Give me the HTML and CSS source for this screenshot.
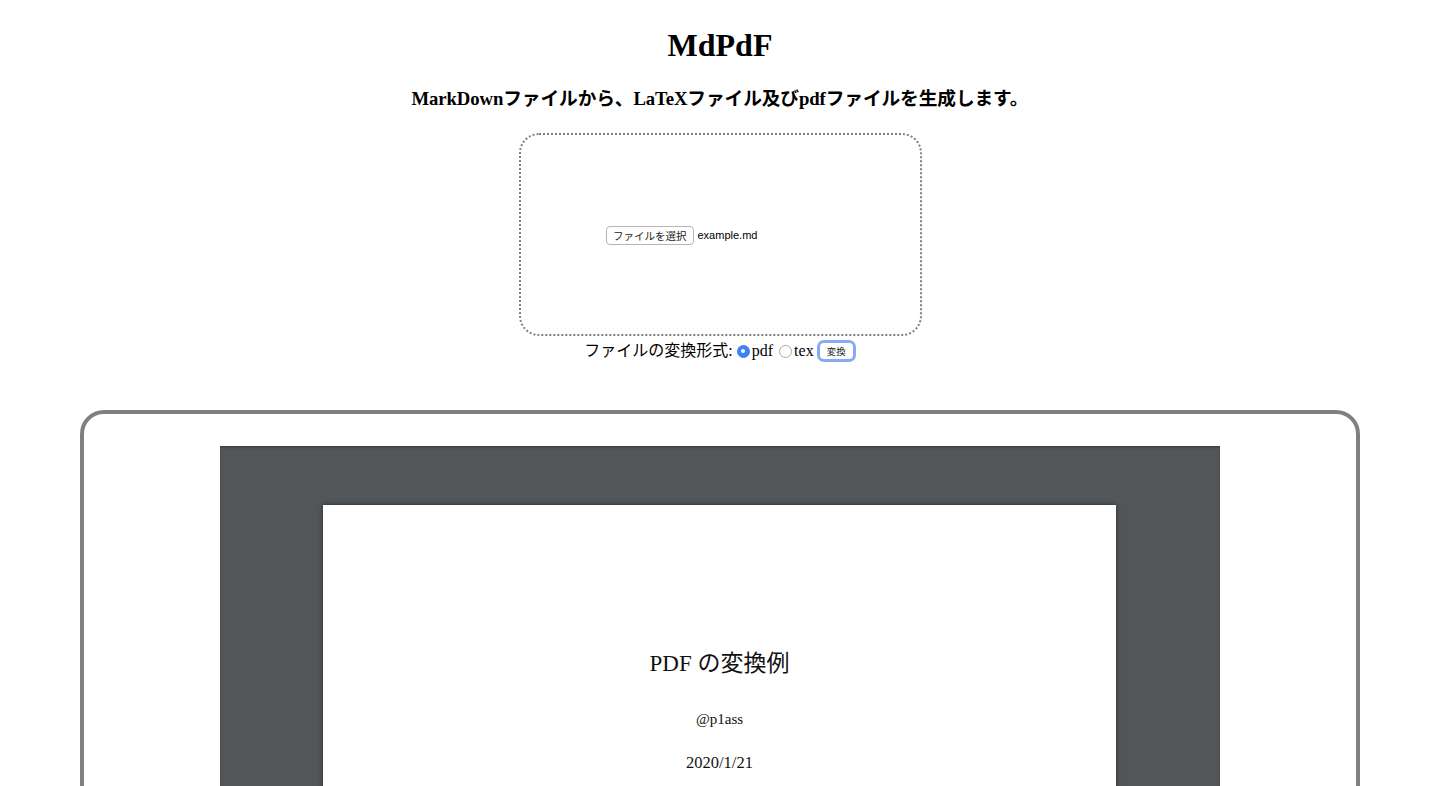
FILE: index.html
```html
<!DOCTYPE html>
<html lang="ja">
<head>
<meta charset="utf-8">
<title>MdPdF</title>
<link rel="stylesheet" href="styles.css">
</head>
<body>
<header class="head">
  <h1 class="title">MdPdF</h1>
  <h3 class="lead">MarkDownファイルから、LaTeXファイル及びpdfファイルを生成します。</h3>
</header>
<form class="form">
  <div class="dropzone">
    <div class="file-input">
      <span class="file-btn">ファイルを選択</span>
      <span class="file-name">example.md</span>
    </div>
  </div>
  <div class="options">
    <span class="label">ファイルの変換形式:</span>
    <span class="radio checked"></span><span class="opt">pdf</span>
    <span class="radio"></span><span class="opt">tex</span>
    <span class="submit-ring"><span class="submit">変換</span></span>
  </div>
</form>
<section class="preview">
  <div class="viewer">
    <div class="page">
      <div class="doc-title">PDF の変換例</div>
      <div class="doc-author">@p1ass</div>
      <div class="doc-date">2020/1/21</div>
    </div>
  </div>
</section>
</body>
</html>
```
FILE: styles.css
```css
html, body {
  margin: 0;
  padding: 0;
  background: #fff;
  overflow: hidden;
}
body {
  font-family: "Liberation Serif", "Noto Sans CJK JP", serif;
  color: #000;
  height: 786px;
}
.head {
  display: flex;
  flex-direction: column;
  align-items: center;
}
.title {
  margin: 27px 0 0;
  font-size: 32px;
  line-height: 36px;
  font-weight: 700;
}
.lead {
  margin: 25px 0 0;
  font-size: 18.72px;
  line-height: 22px;
  font-weight: 700;
  letter-spacing: -0.1px;
}
.form {
  display: flex;
  flex-direction: column;
  align-items: center;
}
.dropzone {
  margin-top: 23px;
  width: 403px;
  height: 203px;
  box-sizing: border-box;
  border: 2px dotted #808080;
  border-radius: 20px;
  display: flex;
  align-items: center;
  justify-content: center;
}
.file-input {
  width: 228px;
  display: flex;
  align-items: center;
  gap: 4px;
  margin-top: 1px;
}
.file-btn {
  display: inline-block;
  box-sizing: border-box;
  height: 19px;
  padding: 0 6px;
  border: 1px solid #b5b5b5;
  border-radius: 4px;
  font-family: "Noto Sans CJK JP", "Liberation Sans", sans-serif;
  font-size: 10.5px;
  line-height: 17px;
  color: #222;
  background: #fff;
}
.file-name {
  font-family: "Liberation Sans", "Noto Sans CJK JP", sans-serif;
  font-size: 11px;
  color: #000;
}
.options {
  margin-top: 3px;
  height: 23px;
  display: flex;
  align-items: center;
  font-size: 16px;
  line-height: 18px;
}
.radio {
  display: inline-block;
  width: 13px;
  height: 13px;
  box-sizing: border-box;
  border-radius: 50%;
  border: 1px solid #a8a8a8;
  background: #fff;
  margin: 1px 2px 0 4px;
  position: relative;
}
.radio.checked {
  background: #3b82f6;
  border-color: #3b82f6;
}
.radio.checked::after {
  content: "";
  position: absolute;
  left: 3.5px;
  top: 3.5px;
  width: 4px;
  height: 4px;
  border-radius: 50%;
  background: #fff;
}
.opt {
  margin-right: 2px;
}
.submit-ring {
  display: inline-flex;
  margin-left: 1px;
  padding: 3px;
  border-radius: 7px;
  background: #8aa9f3;
}
.submit {
  display: inline-block;
  box-sizing: border-box;
  height: 16px;
  padding: 0 7px;
  border-radius: 4px;
  background: #fff;
  font-family: "Noto Sans CJK JP", "Liberation Sans", sans-serif;
  font-size: 9.5px;
  line-height: 16px;
  color: #222;
}
.preview {
  margin: 48px auto 0;
  width: 1280px;
  height: 600px;
  box-sizing: border-box;
  border: 4px solid #808080;
  border-radius: 24px;
  padding-top: 32px;
  display: flex;
  justify-content: center;
}
.viewer {
  width: 1000px;
  height: 560px;
  background: #525659;
  box-shadow: inset 0 2px 3px -1px rgba(0, 0, 0, 0.35);
  display: flex;
  justify-content: center;
  padding-top: 59px;
  padding-right: 1px;
  box-sizing: border-box;
}
.page {
  width: 793px;
  height: 1122px;
  background: #fff;
  box-shadow: 0 0 4px rgba(0, 0, 0, 0.55);
  display: flex;
  flex-direction: column;
  align-items: center;
  font-family: "Liberation Serif", "Noto Sans CJK JP", serif;
  color: #111;
}
.doc-title {
  margin-top: 145px;
  font-size: 23px;
  line-height: 28px;
  font-weight: 400;
}
.doc-author {
  margin-top: 32px;
  font-size: 15px;
  line-height: 18px;
}
.doc-date {
  margin-top: 25px;
  font-size: 16.5px;
  line-height: 20px;
}
```
